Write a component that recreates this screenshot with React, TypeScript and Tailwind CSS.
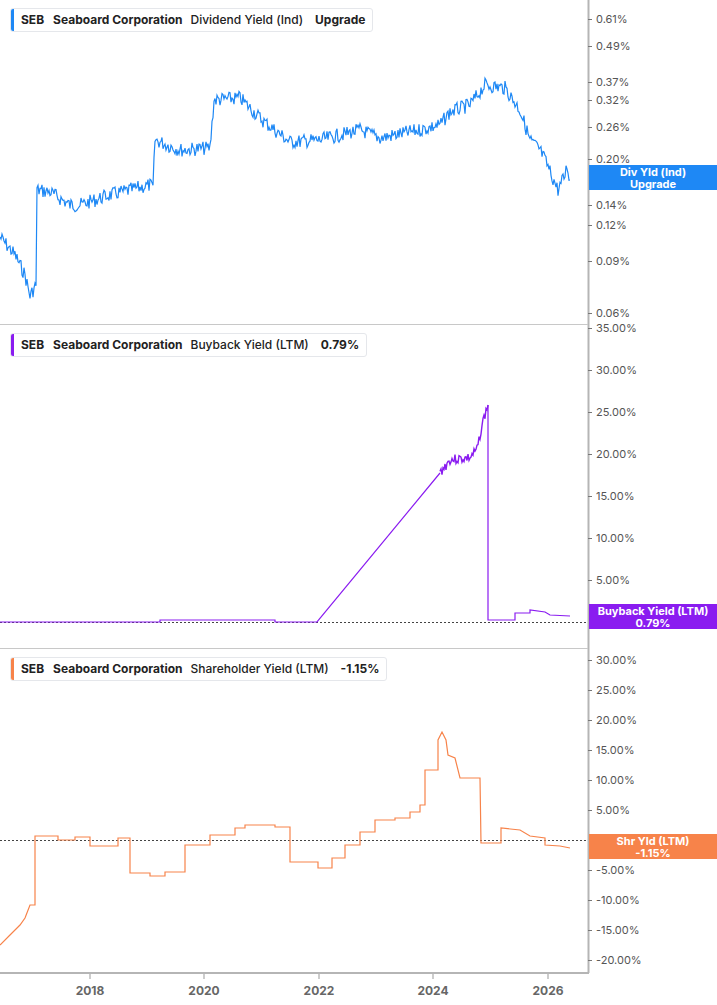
import React from "react";

type P = [number, number];
function noisy(pts: P[], amp: number, seed: number, step = 1.5): string {
  let s = seed;
  const rnd = () => { s = (s * 9301 + 49297) % 233280; return s / 233280; };
  const out: string[] = [];
  for (let i = 0; i < pts.length - 1; i++) {
    const [x0, y0] = pts[i]; const [x1, y1] = pts[i + 1];
    if (x1 === x0) { out.push(`${x1},${y1}`); continue; }
    for (let x = x0; x < x1; x += step) {
      const t = (x - x0) / (x1 - x0);
      out.push(`${x.toFixed(1)},${(y0 + (y1 - y0) * t + (rnd() - 0.5) * amp).toFixed(1)}`);
    }
  }
  const l = pts[pts.length - 1];
  out.push(`${l[0]},${l[1]}`);
  return out.join(" ");
}
const step = (pts: P[]) => pts.map(p => `${p[0]},${p[1]}`).join(" ");

const blue = noisy([[0,237],[15,255],[25,275],[30,296],[36,285],[37,190],[50,192],[70,205],[80,205],[110,195],[150,185],[153,188],[155,140],[180,150],[210,148],[214,100],[240,98],[262,120],[290,142],[320,140],[360,130],[380,138],[420,130],[440,125],[450,112],[470,105],[485,85],[505,88],[520,110],[530,140],[540,150],[545,160],[558,190],[565,175],[567,165],[570,180]], 14, 7, 1);
const purpleFlat = step([[0,622],[160,622],[160,620],[275,620],[275,622],[317,622],[440,473]]);
const purpleNoisy = noisy([[440,473],[450,460],[470,458],[477,450],[482,425],[488,405]], 10, 3, 1);
const purpleEnd = step([[488,405],[488,620],[515,620],[515,613],[530,613],[530,610],[545,612],[550,615],[570,616]]);
const orange = step([[0,945],[10,935],[20,925],[25,918],[30,905],[35,905],[35,836],[58,836],[58,840],[75,840],[75,837],[90,837],[90,846],[118,846],[118,838],[130,838],[130,873],[150,873],[150,876],[165,876],[165,872],[185,872],[185,845],[210,845],[210,835],[235,835],[235,828],[245,828],[245,825],[275,825],[275,827],[290,827],[290,862],[318,862],[318,868],[332,868],[332,858],[345,858],[345,845],[360,845],[360,832],[375,832],[375,820],[395,820],[395,818],[410,818],[410,812],[420,812],[420,805],[425,805],[425,770],[438,770],[438,740],[442,732],[446,740],[448,755],[455,758],[460,778],[480,778],[481,843],[488,843],[501,843],[501,828],[520,830],[530,836],[545,838],[545,845],[560,846],[570,848]]);

const Legend = ({ color, name, val }: { color: string; name: string; val: string }) => (
  <div className="absolute left-[10px] top-[8px] flex items-center h-[24px] border border-[#e5e7eb] rounded-[3px] bg-white overflow-hidden text-[12px] font-semibold text-[#222] pr-[7px]">
    <div className="w-[3px] self-stretch" style={{ background: color }} />
    <span className="ml-[7px] font-bold">SEB</span>
    <span className="ml-[9px] font-bold">Seaboard Corporation</span>
    <span className="ml-[8px] font-medium">{name}</span>
    <span className="ml-[12px] font-bold">{val}</span>
  </div>
);

const Ticks = ({ items, top }: { items: [string, number][]; top: number }) => (
  <>
    {items.map(([l, y]) => (
      <div key={l} className="absolute left-[588px] flex items-center h-[14px] text-[11px] text-[#555]" style={{ top: y - top - 7 }}>
        <div className="w-[4px] h-[1px] bg-[#777]" />
        <span className="ml-[4px]">{l}</span>
      </div>
    ))}
  </>
);

export default function App() {
  return (
    <div className="w-[717px] h-[1005px] bg-white relative overflow-hidden" style={{ fontFamily: "Inter, 'Liberation Sans', sans-serif" }}>
      <svg className="absolute left-0 top-0" width="717" height="1005">
        <line x1="588.5" y1="0" x2="588.5" y2="973" stroke="#b5b5b5" strokeWidth="2" />
        <line x1="0" y1="324.5" x2="588" y2="324.5" stroke="#c8c8c8" />
        <line x1="0" y1="648.5" x2="588" y2="648.5" stroke="#c8c8c8" />
        <line x1="0" y1="973" x2="589" y2="973" stroke="#b5b5b5" strokeWidth="2" />
        <line x1="0" y1="622.5" x2="588" y2="622.5" stroke="#444" strokeDasharray="2 2" />
        <line x1="0" y1="840.5" x2="588" y2="840.5" stroke="#444" strokeDasharray="2 2" />
        {[90, 204, 319, 433, 548].map(x => <line key={x} x1={x} y1="974" x2={x} y2="979" stroke="#999" />)}
        <polyline points={blue} fill="none" stroke="#1e88f5" strokeWidth="1.2" />
        <polyline points={purpleFlat} fill="none" stroke="#8a1cf0" strokeWidth="1.2" />
        <polyline points={purpleNoisy} fill="none" stroke="#8a1cf0" strokeWidth="1.4" />
        <polyline points={purpleEnd} fill="none" stroke="#8a1cf0" strokeWidth="1.2" />
        <polyline points={orange} fill="none" stroke="#f7834a" strokeWidth="1.2" />
      </svg>
      <div className="absolute left-0 top-0 w-[717px] h-[324px]">
        <Legend color="#1e88f5" name="Dividend Yield (Ind)" val="Upgrade" />
        <Ticks top={0} items={[["0.61%",19],["0.49%",46],["0.37%",82],["0.32%",100],["0.26%",127],["0.20%",159],["0.14%",205],["0.12%",225],["0.09%",261],["0.06%",313]]} />
        <div className="absolute left-[589px] top-[165px] w-[128px] h-[25px] bg-[#1e88f5] text-white text-[11px] font-bold leading-[12px] flex flex-col items-center justify-center">
          <span>Div Yld (Ind)</span><span>Upgrade</span>
        </div>
      </div>
      <div className="absolute left-0 top-[325px] w-[717px] h-[323px]">
        <Legend color="#8a1cf0" name="Buyback Yield (LTM)" val="0.79%" />
        <Ticks top={325} items={[["35.00%",328],["30.00%",370],["25.00%",412],["20.00%",454],["15.00%",496],["10.00%",538],["5.00%",580]]} />
        <div className="absolute left-[589px] top-[279px] w-[128px] h-[25px] bg-[#8a1cf0] text-white text-[11px] font-bold leading-[12px] flex flex-col items-center justify-center">
          <span>Buyback Yield (LTM)</span><span>0.79%</span>
        </div>
      </div>
      <div className="absolute left-0 top-[649px] w-[717px] h-[324px]">
        <Legend color="#f7834a" name="Shareholder Yield (LTM)" val="-1.15%" />
        <Ticks top={649} items={[["30.00%",660],["25.00%",690],["20.00%",720],["15.00%",750],["10.00%",780],["5.00%",810],["-5.00%",870],["-10.00%",900],["-15.00%",930],["-20.00%",960]]} />
        <div className="absolute left-[589px] top-[185px] w-[128px] h-[25px] bg-[#f7834a] text-white text-[11px] font-bold leading-[12px] flex flex-col items-center justify-center">
          <span>Shr Yld (LTM)</span><span>-1.15%</span>
        </div>
      </div>
      {[["2018",90],["2020",204],["2022",319],["2024",433],["2026",548]].map(([l, x]) => (
        <div key={l as string} className="absolute top-[982px] w-[40px] -ml-[20px] text-center text-[12px] font-bold text-[#666]" style={{ left: x as number }}>{l}</div>
      ))}
    </div>
  );
}
